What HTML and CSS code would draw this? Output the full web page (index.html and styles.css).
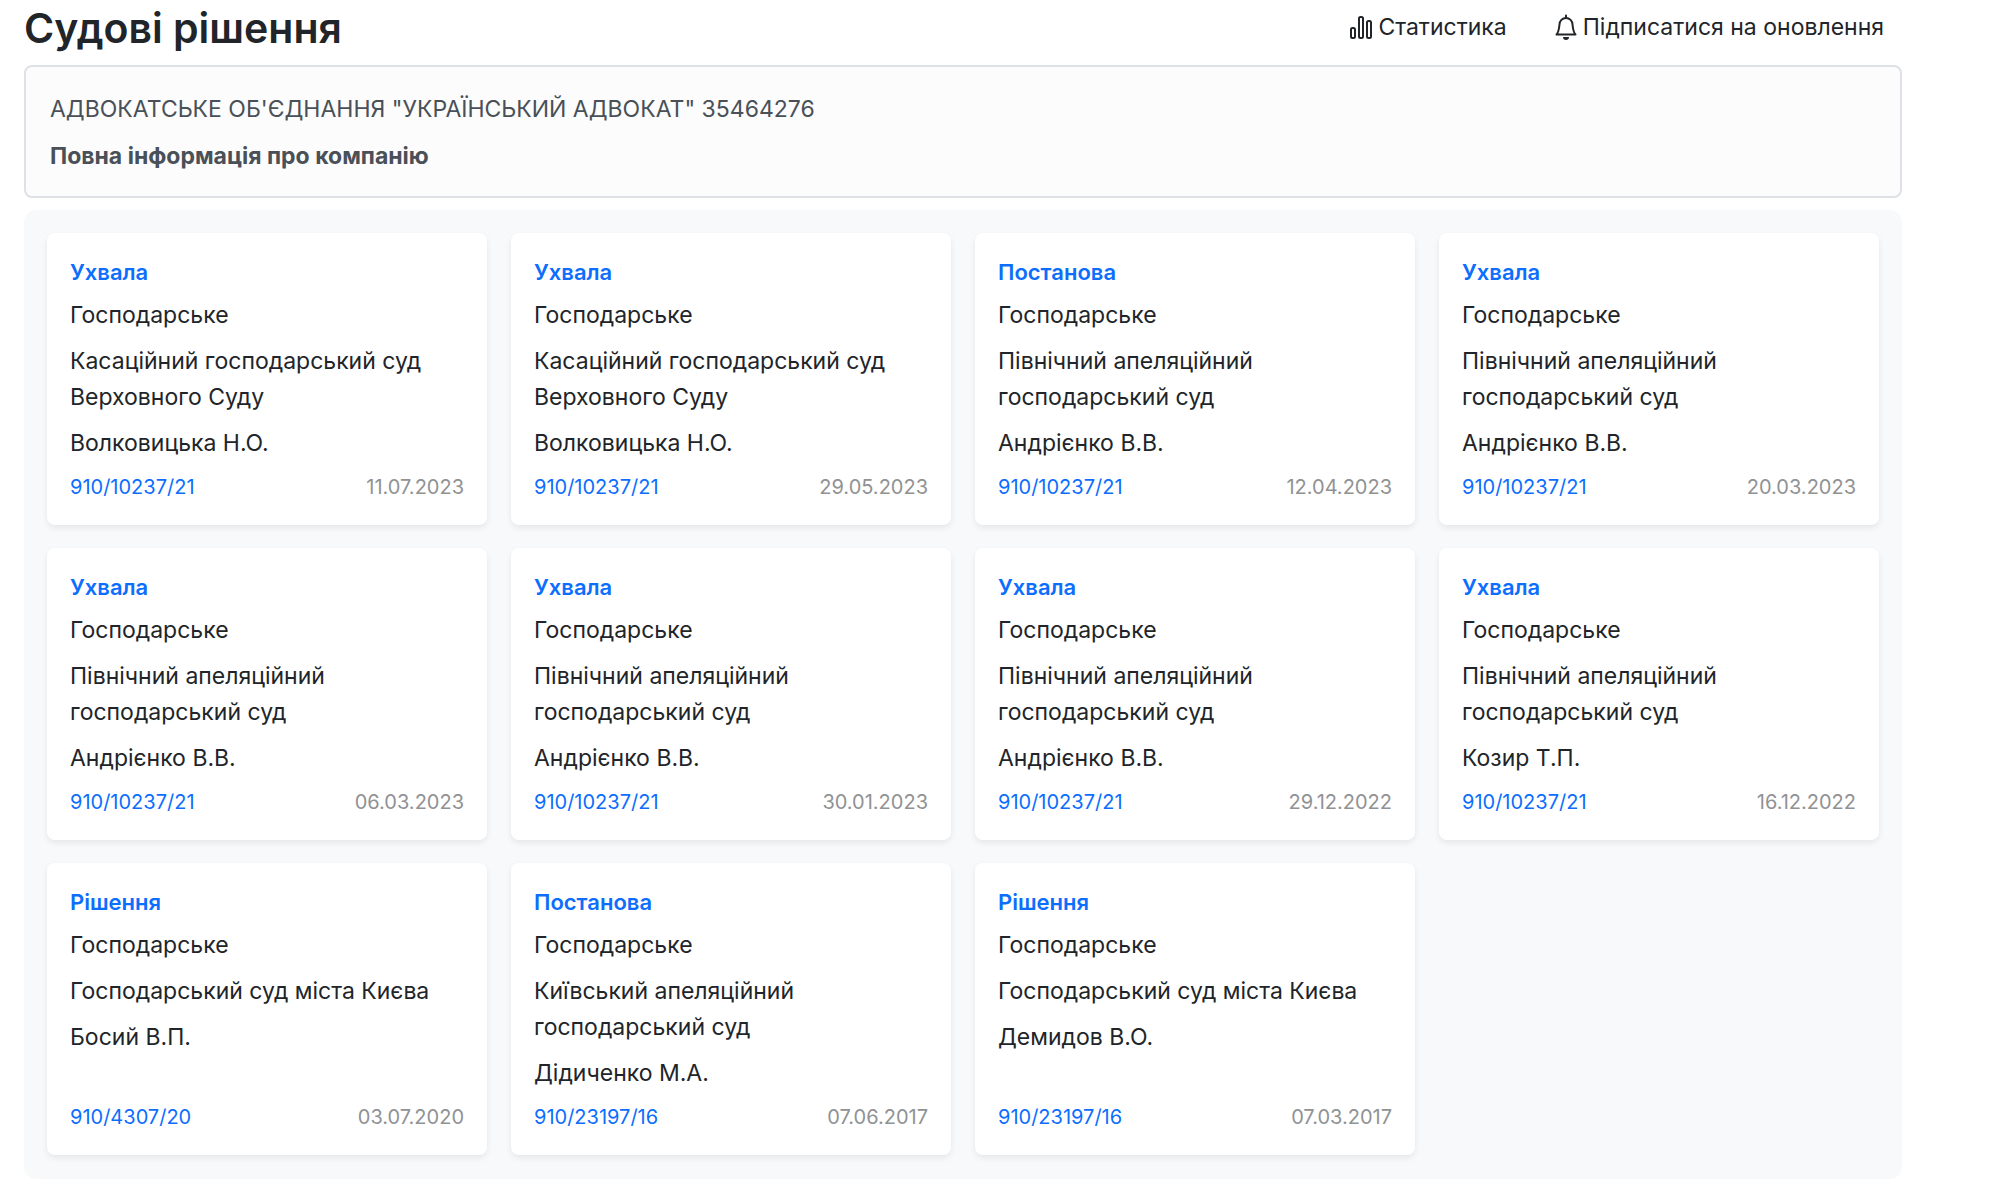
FILE: index.html
```html
<!DOCTYPE html>
<html lang="uk">
<head>
<meta charset="utf-8">
<title>Судові рішення</title>
<link rel="stylesheet" href="styles.css">
</head>
<body>
<main class="page">
  <header class="header">
    <h1 class="title">Судові рішення</h1>
    <nav class="actions">
      <a class="action" href="#stats"><svg class="icon" viewBox="0 0 22 26" aria-hidden="true"><rect x="1" y="14" width="4" height="10" rx="1.500"/><rect x="9" y="3" width="4" height="21" rx="1.500"/><rect x="17" y="7" width="4" height="17" rx="1.500"/></svg>Статистика</a>
      <a class="action" href="#subscribe"><svg class="icon" viewBox="0 0 22 26" aria-hidden="true"><path d="M11 1.500v2M1.500 20.500h19c-2-2-2.500-5-3-10a6.500 6.500 0 0 0-13 0c-.5 5-1 8-3 10z"/><path class="icon-fill" d="M8 23h6a3 3 0 0 1-6 0z"/></svg>Підписатися на оновлення</a>
    </nav>
  </header>
  <section class="company">
    <p class="company-name">АДВОКАТСЬКЕ ОБ'ЄДНАННЯ "УКРАЇНСЬКИЙ АДВОКАТ" 35464276</p>
    <a class="company-link" href="#company">Повна інформація про компанію</a>
  </section>
  <section class="decisions">
    <article class="card"><h2 class="card-title"><a href="#d1">Ухвала</a></h2><p>Господарське</p><p>Касаційний господарський суд Верховного Суду</p><p>Волковицька Н.О.</p><footer class="card-footer"><a href="#c1">910/10237/21</a><time>11.07.2023</time></footer></article>
    <article class="card"><h2 class="card-title"><a href="#d2">Ухвала</a></h2><p>Господарське</p><p>Касаційний господарський суд Верховного Суду</p><p>Волковицька Н.О.</p><footer class="card-footer"><a href="#c2">910/10237/21</a><time>29.05.2023</time></footer></article>
    <article class="card"><h2 class="card-title"><a href="#d3">Постанова</a></h2><p>Господарське</p><p>Північний апеляційний господарський суд</p><p>Андрієнко В.В.</p><footer class="card-footer"><a href="#c3">910/10237/21</a><time>12.04.2023</time></footer></article>
    <article class="card"><h2 class="card-title"><a href="#d4">Ухвала</a></h2><p>Господарське</p><p>Північний апеляційний господарський суд</p><p>Андрієнко В.В.</p><footer class="card-footer"><a href="#c4">910/10237/21</a><time>20.03.2023</time></footer></article>
    <article class="card"><h2 class="card-title"><a href="#d5">Ухвала</a></h2><p>Господарське</p><p>Північний апеляційний господарський суд</p><p>Андрієнко В.В.</p><footer class="card-footer"><a href="#c5">910/10237/21</a><time>06.03.2023</time></footer></article>
    <article class="card"><h2 class="card-title"><a href="#d6">Ухвала</a></h2><p>Господарське</p><p>Північний апеляційний господарський суд</p><p>Андрієнко В.В.</p><footer class="card-footer"><a href="#c6">910/10237/21</a><time>30.01.2023</time></footer></article>
    <article class="card"><h2 class="card-title"><a href="#d7">Ухвала</a></h2><p>Господарське</p><p>Північний апеляційний господарський суд</p><p>Андрієнко В.В.</p><footer class="card-footer"><a href="#c7">910/10237/21</a><time>29.12.2022</time></footer></article>
    <article class="card"><h2 class="card-title"><a href="#d8">Ухвала</a></h2><p>Господарське</p><p>Північний апеляційний господарський суд</p><p>Козир Т.П.</p><footer class="card-footer"><a href="#c8">910/10237/21</a><time>16.12.2022</time></footer></article>
    <article class="card"><h2 class="card-title"><a href="#d9">Рішення</a></h2><p>Господарське</p><p>Господарський суд міста Києва</p><p>Босий В.П.</p><footer class="card-footer"><a href="#c9">910/4307/20</a><time>03.07.2020</time></footer></article>
    <article class="card"><h2 class="card-title"><a href="#d10">Постанова</a></h2><p>Господарське</p><p>Київський апеляційний господарський суд</p><p>Дідиченко М.А.</p><footer class="card-footer"><a href="#c10">910/23197/16</a><time>07.06.2017</time></footer></article>
    <article class="card"><h2 class="card-title"><a href="#d11">Рішення</a></h2><p>Господарське</p><p>Господарський суд міста Києва</p><p>Демидов В.О.</p><footer class="card-footer"><a href="#c11">910/23197/16</a><time>07.03.2017</time></footer></article>
  </section>
</main>
</body>
</html>
```
FILE: styles.css
```css
* {
  box-sizing: border-box;
}

body {
  margin: 0;
  background: #fff;
  color: #212529;
  font: 400 23px/36px Inter, "Liberation Sans", sans-serif;
}

h1, h2, p {
  margin: 0;
}

a {
  color: #0d6efd;
  text-decoration: none;
}

.page {
  padding: 0 98px 17px 24px;
}

.header {
  display: flex;
  align-items: flex-start;
  justify-content: space-between;
  padding: 3px 18px 12px 0;
}

.title {
  font-size: 41px;
  font-weight: 600;
  line-height: 50px;
}

.actions {
  display: flex;
  gap: 48px;
  padding-top: 6px;
}

.action {
  display: flex;
  align-items: center;
  gap: 6px;
  color: #212529;
}

.icon {
  width: 22px;
  height: 26px;
  fill: none;
  stroke: currentColor;
  stroke-width: 2;
  stroke-linejoin: round;
  stroke-linecap: round;
}

.icon-fill {
  fill: currentColor;
  stroke: none;
}

.company {
  display: flex;
  flex-direction: column;
  align-items: flex-start;
  gap: 11px;
  padding: 24px 24px 22px;
  border: 2px solid #dee2e6;
  border-radius: 8px;
  background: #fcfcfc;
  color: #495057;
}

.company-link {
  color: inherit;
  font-weight: 700;
}

.decisions {
  display: grid;
  grid-template-columns: repeat(4, 1fr);
  gap: 23px 24px;
  margin-top: 12px;
  padding: 23px 23px 24px;
  border-radius: 12px;
  background: #f8f9fa;
}

.card {
  display: flex;
  flex-direction: column;
  gap: 10px;
  padding: 24px 23px 22px;
  border-radius: 8px;
  background: #fff;
  box-shadow: 0 3px 6px rgba(0, 0, 0, 0.075);
}

.card-title {
  font-size: 22px;
  font-weight: 600;
  line-height: 30px;
}

.card-footer {
  display: flex;
  justify-content: space-between;
  margin-top: auto;
  font-size: 20px;
  line-height: 32px;
}

.card-footer time {
  color: #909294;
}
```
